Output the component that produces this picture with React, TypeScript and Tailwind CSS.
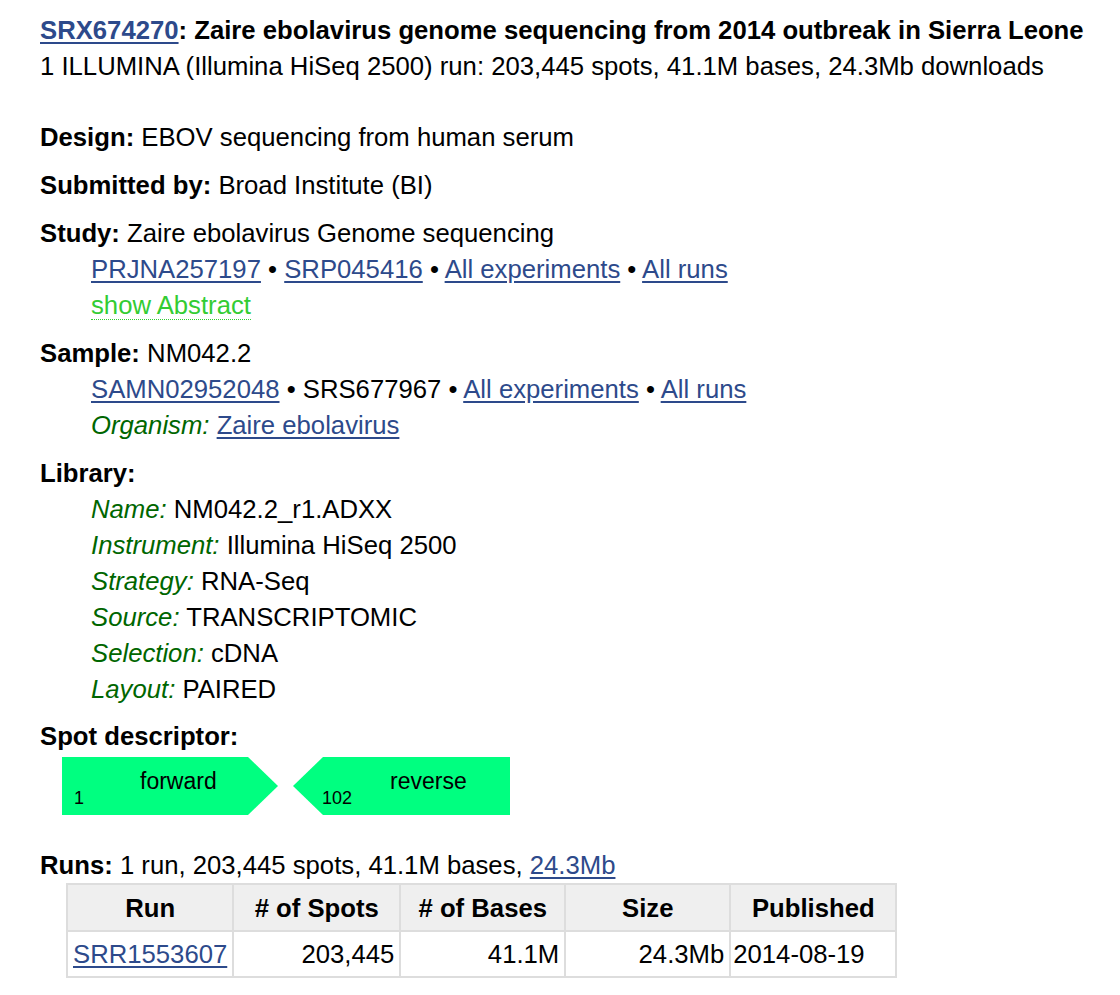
import React from 'react';

const Link: React.FC<{ children: React.ReactNode }> = ({ children }) => (
  <a href="#" className="text-[#2d4a8b] underline underline-offset-[3px]">
    {children}
  </a>
);

const Label: React.FC<{ children: React.ReactNode }> = ({ children }) => (
  <i className="text-[#006600]">{children}</i>
);

const Dot = () => <span> • </span>;

const App: React.FC = () => {
  const library: [string, string][] = [
    ['Name', 'NM042.2_r1.ADXX'],
    ['Instrument', 'Illumina HiSeq 2500'],
    ['Strategy', 'RNA-Seq'],
    ['Source', 'TRANSCRIPTOMIC'],
    ['Selection', 'cDNA'],
    ['Layout', 'PAIRED'],
  ];

  return (
    <div className="min-h-[995px] bg-white pl-[40px] pt-[12px] text-[25.7px] leading-[36px] text-black font-['Liberation_Sans',Arial,sans-serif]">
      {/* Header */}
      <p className="font-bold">
        <Link>SRX674270</Link>: Zaire ebolavirus genome sequencing from 2014 outbreak in Sierra Leone
      </p>
      <p>1 ILLUMINA (Illumina HiSeq 2500) run: 203,445 spots, 41.1M bases, 24.3Mb downloads</p>

      <div className="mt-[35px] flex flex-col gap-[12px]">
        <p>
          <b>Design:</b> EBOV sequencing from human serum
        </p>
        <p>
          <b>Submitted by:</b> Broad Institute (BI)
        </p>

        {/* Study */}
        <div>
          <p>
            <b>Study:</b> Zaire ebolavirus Genome sequencing
          </p>
          <div className="ml-[51px]">
            <p>
              <Link>PRJNA257197</Link>
              <Dot />
              <Link>SRP045416</Link>
              <Dot />
              <Link>All experiments</Link>
              <Dot />
              <Link>All runs</Link>
            </p>
            <p>
              <span className="text-[#33cc33] border-b border-dotted border-[#33cc33]">show Abstract</span>
            </p>
          </div>
        </div>

        {/* Sample */}
        <div>
          <p>
            <b>Sample:</b> NM042.2
          </p>
          <div className="ml-[51px]">
            <p>
              <Link>SAMN02952048</Link>
              <Dot />
              SRS677967
              <Dot />
              <Link>All experiments</Link>
              <Dot />
              <Link>All runs</Link>
            </p>
            <p>
              <Label>Organism:</Label> <Link>Zaire ebolavirus</Link>
            </p>
          </div>
        </div>

        {/* Library */}
        <div>
          <p>
            <b>Library:</b>
          </p>
          <div className="ml-[51px]">
            {library.map(([k, v]) => (
              <p key={k}>
                <Label>{k}:</Label> {v}
              </p>
            ))}
          </div>
        </div>

        {/* Spot descriptor */}
        <div className="-mt-[1px]">
          <p>
            <b>Spot descriptor:</b>
          </p>
          <div className="mt-[3px] ml-[22px] flex gap-[15px]">
            <div className="relative w-[216px] h-[58px] bg-[#00ff80] [clip-path:polygon(0_0,186px_0,216px_29px,186px_58px,0_58px)]">
              <span className="absolute left-[78px] top-[13px] text-[23px] leading-none">forward</span>
              <span className="absolute left-[12px] top-[32px] text-[18px] leading-none">1</span>
            </div>
            <div className="relative w-[217px] h-[58px] bg-[#00ff80] [clip-path:polygon(30px_0,100%_0,100%_100%,30px_100%,0_29px)]">
              <span className="absolute left-[97px] top-[13px] text-[23px] leading-none">reverse</span>
              <span className="absolute left-[29px] top-[32px] text-[18px] leading-none">102</span>
            </div>
          </div>
        </div>

        {/* Runs */}
        <div className="mt-[20px]">
          <p>
            <b>Runs:</b> 1 run, 203,445 spots, 41.1M bases, <Link>24.3Mb</Link>
          </p>
          <table className="ml-[26px] border-collapse">
            <thead>
              <tr className="bg-[#efefef]">
                <th className="w-[163px] h-[47px] border-2 border-[#dddddd] font-bold">Run</th>
                <th className="w-[167px] h-[47px] border-2 border-[#dddddd] font-bold"># of Spots</th>
                <th className="w-[165px] h-[47px] border-2 border-[#dddddd] font-bold"># of Bases</th>
                <th className="w-[165px] h-[47px] border-2 border-[#dddddd] font-bold">Size</th>
                <th className="w-[166px] h-[47px] border-2 border-[#dddddd] font-bold">Published</th>
              </tr>
            </thead>
            <tbody>
              <tr>
                <td className="h-[46px] border-2 border-[#dddddd] px-[5px] text-left">
                  <Link>SRR1553607</Link>
                </td>
                <td className="h-[46px] border-2 border-[#dddddd] px-[5px] text-right">203,445</td>
                <td className="h-[46px] border-2 border-[#dddddd] px-[5px] text-right">41.1M</td>
                <td className="h-[46px] border-2 border-[#dddddd] px-[5px] text-right">24.3Mb</td>
                <td className="h-[46px] border-2 border-[#dddddd] px-[2px] text-left">2014-08-19</td>
              </tr>
            </tbody>
          </table>
        </div>
      </div>
    </div>
  );
};

export default App;
